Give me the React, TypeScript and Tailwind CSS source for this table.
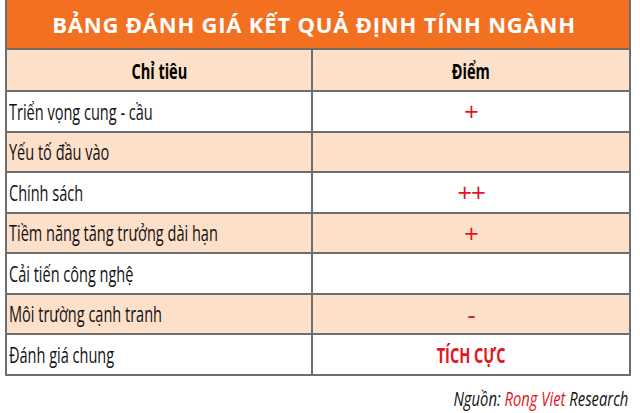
const rows: { label: string; score: string; shaded: boolean; strong?: boolean }[] = [
  { label: 'Triển vọng cung - cầu', score: '+', shaded: false },
  { label: 'Yếu tố đầu vào', score: '', shaded: true },
  { label: 'Chính sách', score: '++', shaded: false },
  { label: 'Tiềm năng tăng trưởng dài hạn', score: '+', shaded: true },
  { label: 'Cải tiến công nghệ', score: '', shaded: false },
  { label: 'Môi trường cạnh tranh', score: '-', shaded: true },
  { label: 'Đánh giá chung', score: 'TÍCH CỰC', shaded: false, strong: true },
]

// no condensed face installed, so squeeze Open Sans horizontally
const cond = "inline-block whitespace-nowrap font-['Open_Sans',sans-serif] scale-x-[0.66]"

export default function App() {
  return (
    <div className="w-[640px] h-[413px] bg-white overflow-hidden">
      <div className="ml-[5px] w-[626px] border-x-2 border-b-2 border-[#6e6e6e]">
        <div className="h-[48px] bg-[#f37021] flex items-center justify-center">
          <h1 className="text-white text-[22px] font-bold tracking-[0.8px] font-['Open_Sans',sans-serif] leading-none pr-[8px]">
            BẢNG ĐÁNH GIÁ KẾT QUẢ ĐỊNH TÍNH NGÀNH
          </h1>
        </div>
        <div className="grid grid-cols-[306px_1fr] h-[42px] bg-[#fde0c9] border-t-2 border-[#6e6e6e] font-bold text-[22px] text-black">
          <div className="flex items-center justify-center border-r-2 border-[#6e6e6e]">
            <span className={`${cond} origin-center`}>Chỉ tiêu</span>
          </div>
          <div className="flex items-center justify-center">
            <span className={`${cond} origin-center`}>Điểm</span>
          </div>
        </div>
        {rows.map((r) => (
          <div
            key={r.label}
            className={`grid grid-cols-[306px_1fr] h-[40.5px] border-t-2 border-[#6e6e6e] text-[22px] ${r.shaded ? 'bg-[#fde0c9]' : 'bg-white'}`}
          >
            <div className="flex items-center pl-[2px] border-r-2 border-[#6e6e6e] text-[#111]">
              <span className={`${cond} origin-left`}>{r.label}</span>
            </div>
            <div className="flex items-center justify-center text-[#e3161e]">
              {r.strong ? (
                <span className={`${cond} origin-center font-bold text-[22px] scale-x-[0.62]`}>{r.score}</span>
              ) : (
                <span className="font-['Open_Sans',sans-serif] text-[26px] leading-none tracking-[-1px]">{r.score}</span>
              )}
            </div>
          </div>
        ))}
      </div>
      <p className="mt-[8px] pr-[12px] text-right text-[20px] text-[#111]">
        <span className="inline-block whitespace-nowrap font-['Open_Sans',sans-serif] scale-x-[0.74] origin-right italic">
          Nguồn: <span className="text-[#e3161e]">Rong Viet</span> Research
        </span>
      </p>
    </div>
  )
}
